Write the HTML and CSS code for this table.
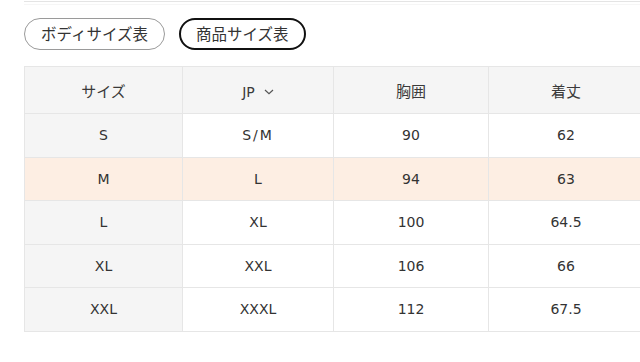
FILE: index.html
```html
<!DOCTYPE html>
<html lang="ja">
<head>
<meta charset="utf-8">
<link rel="stylesheet" href="styles.css">
</head>
<body>
<div class="wrap">
  <div class="topline"></div>
  <div class="tabs">
    <button class="tab">ボディサイズ表</button>
    <button class="tab active">商品サイズ表</button>
  </div>
  <table class="size-table">
    <colgroup>
      <col class="c1"><col class="c2"><col class="c3"><col class="c4">
    </colgroup>
    <thead>
      <tr>
        <th>サイズ</th>
        <th><span class="jp">JP <svg class="chev" width="10" height="6" viewBox="0 0 10 6"><path d="M1 1 L5 4.6 L9 1" fill="none" stroke="#555" stroke-width="1.2"/></svg></span></th>
        <th>胸囲</th>
        <th>着丈</th>
      </tr>
    </thead>
    <tbody>
      <tr><td class="first">S</td><td class="wide">S/M</td><td>90</td><td>62</td></tr>
      <tr class="hl"><td class="first">M</td><td>L</td><td>94</td><td>63</td></tr>
      <tr><td class="first">L</td><td>XL</td><td>100</td><td>64.5</td></tr>
      <tr><td class="first">XL</td><td>XXL</td><td>106</td><td>66</td></tr>
      <tr><td class="first">XXL</td><td>XXXL</td><td>112</td><td>67.5</td></tr>
    </tbody>
  </table>
</div>
</body>
</html>
```
FILE: styles.css
```css
html, body {
  margin: 0;
  padding: 0;
  background: #fff;
}
body {
  width: 640px;
  height: 362px;
  overflow: hidden;
  font-family: "DejaVu Sans", "Noto Sans CJK JP", sans-serif;
  color: #333;
}
.wrap {
  padding-left: 24px;
  padding-top: 1px;
}
.topline {
  height: 1px;
  background: #e4e4e4;
  box-shadow: 0 3px 0 #f6f6f6;
}
.tabs {
  display: flex;
  gap: 14px;
  margin-top: 16px;
}
.tab {
  box-sizing: border-box;
  height: 32px;
  padding: 0 16px;
  border: 1px solid #9a9a9a;
  border-radius: 16px;
  background: #fff;
  font-family: "Noto Sans CJK JP", sans-serif;
  font-size: 15.5px;
  color: #333;
  line-height: 1;
}
.tab.active {
  border: 2px solid #111;
  padding: 0 15px;
}
.size-table {
  margin-top: 16px;
  border-collapse: collapse;
  table-layout: fixed;
  width: 619px;
  font-size: 14px;
}
.c1 { width: 158px; }
.c2 { width: 151px; }
.c3 { width: 155px; }
.c4 { width: 155px; }
.size-table th,
.size-table td {
  border: 1px solid #e6e6e6;
  text-align: center;
  padding: 0;
  font-weight: normal;
}
.size-table th {
  height: 46px;
  background: #f5f5f5;
  font-family: "Noto Sans CJK JP", sans-serif;
  font-size: 15px;
  color: #3a3a3a;
}
.size-table td {
  height: 42.5px;
  background: #fff;
}
.size-table td.first {
  background: #f5f5f5;
}
.size-table tr.hl td {
  background: #fdeee3;
}
.jp {
  display: inline-flex;
  align-items: center;
  gap: 9px;
  font-family: "DejaVu Sans", sans-serif;
  font-size: 14px;
}
.chev {
  display: block;
}
.wide {
  letter-spacing: 2px;
}
```
